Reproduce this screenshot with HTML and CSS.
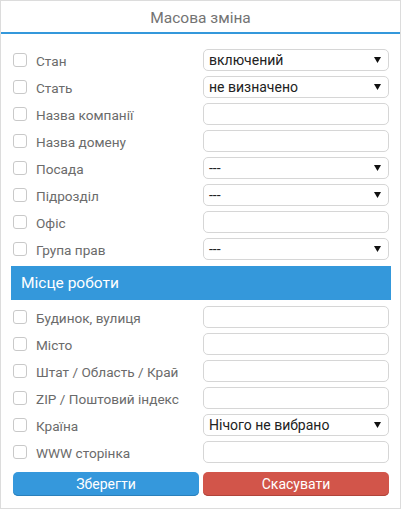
FILE: index.html
```html
<!DOCTYPE html>
<html lang="uk">
<head>
<meta charset="utf-8">
<link rel="stylesheet" href="styles.css">
</head>
<body>
<div class="dialog">
  <div class="header"><span class="title">Масова зміна</span></div>
  <div class="body">
    <div class="rows">
      <div class="row"><span class="check"></span><span class="label">Стан</span><div class="select">включений<svg class="arrow" width="7" height="6" viewBox="0 0 7 6"><path d="M0 0H7L3.5 6Z"/></svg></div></div>
      <div class="row"><span class="check"></span><span class="label">Стать</span><div class="select">не визначено<svg class="arrow" width="7" height="6" viewBox="0 0 7 6"><path d="M0 0H7L3.5 6Z"/></svg></div></div>
      <div class="row"><span class="check"></span><span class="label">Назва компанії</span><div class="input"></div></div>
      <div class="row"><span class="check"></span><span class="label">Назва домену</span><div class="input"></div></div>
      <div class="row"><span class="check"></span><span class="label">Посада</span><div class="select">---<svg class="arrow" width="7" height="6" viewBox="0 0 7 6"><path d="M0 0H7L3.5 6Z"/></svg></div></div>
      <div class="row"><span class="check"></span><span class="label">Підрозділ</span><div class="select">---<svg class="arrow" width="7" height="6" viewBox="0 0 7 6"><path d="M0 0H7L3.5 6Z"/></svg></div></div>
      <div class="row"><span class="check"></span><span class="label">Офіс</span><div class="input"></div></div>
      <div class="row"><span class="check"></span><span class="label">Група прав</span><div class="select">---<svg class="arrow" width="7" height="6" viewBox="0 0 7 6"><path d="M0 0H7L3.5 6Z"/></svg></div></div>
    </div>
    <div class="group">Місце роботи</div>
    <div class="rows">
      <div class="row"><span class="check"></span><span class="label">Будинок, вулиця</span><div class="input"></div></div>
      <div class="row"><span class="check"></span><span class="label">Місто</span><div class="input"></div></div>
      <div class="row"><span class="check"></span><span class="label">Штат / Область / Край</span><div class="input"></div></div>
      <div class="row"><span class="check"></span><span class="label">ZIP / Поштовий індекс</span><div class="input"></div></div>
      <div class="row"><span class="check"></span><span class="label">Країна</span><div class="select">Нічого не вибрано<svg class="arrow" width="7" height="6" viewBox="0 0 7 6"><path d="M0 0H7L3.5 6Z"/></svg></div></div>
      <div class="row"><span class="check"></span><span class="label">WWW сторінка</span><div class="input"></div></div>
    </div>
    <div class="buttons">
      <div class="btn save">Зберегти</div>
      <div class="btn cancel">Скасувати</div>
    </div>
  </div>
</div>
</body>
</html>
```
FILE: styles.css
```css
* { box-sizing: border-box; }
html, body { margin: 0; padding: 0; background: #fff; }
body { font-family: Roboto, "Liberation Sans", sans-serif; }
.dialog {
  width: 401px;
  height: 509px;
  border: 1px solid #dcdcdc;
  display: flex;
  flex-direction: column;
}
.header {
  height: 33px;
  border-bottom: 2px solid #3498db;
  display: flex;
  align-items: center;
  justify-content: center;
}
.title {
  font-size: 15.5px;
  color: #737373;
  margin-top: 2px;
}
.body {
  padding: 15px 9px 0 10px;
  display: flex;
  flex-direction: column;
}
.rows {
  display: flex;
  flex-direction: column;
  gap: 5px;
  padding: 0 2px;
}
.row {
  display: grid;
  grid-template-columns: 14px 1fr 186px;
  column-gap: 9px;
  align-items: center;
  height: 22px;
}
.check {
  width: 14px;
  height: 14px;
  border: 1px solid #c9c9c9;
  border-radius: 3px;
}
.label {
  font-size: 13.6px;
  color: #6b6b6b;
  white-space: nowrap;
  margin-top: 2px;
}
.input, .select {
  height: 22px;
  border: 1px solid #d6d6d6;
  border-radius: 5px;
}
.select {
  display: flex;
  align-items: center;
  justify-content: space-between;
  padding: 0 7px 0 5px;
  font-size: 14px;
  color: #222;
}
.arrow { fill: #111; }
.group {
  margin: 6px 0;
  height: 34px;
  background: #3498db;
  color: #fff;
  font-size: 15.5px;
  display: flex;
  align-items: center;
  padding-left: 10px;
}
.buttons {
  display: grid;
  grid-template-columns: 186px 186px;
  column-gap: 4px;
  padding: 0 2px;
  margin-top: 9px;
}
.btn {
  height: 24px;
  border-radius: 5px;
  color: #fff;
  font-size: 14px;
  display: flex;
  align-items: center;
  justify-content: center;
}
.save { background: #3598dc; box-shadow: inset 0 -1px 0 #2a80bb; }
.cancel { background: #d2554a; box-shadow: inset 0 -1px 0 #b0443a; }
```
